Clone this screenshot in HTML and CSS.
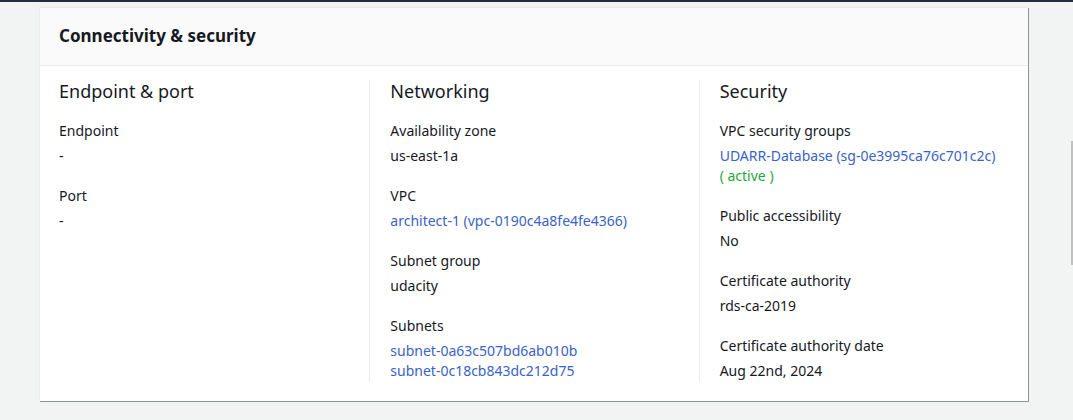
FILE: index.html
```html
<!DOCTYPE html>
<html lang="en">
<head>
<meta charset="utf-8">
<title>Connectivity &amp; security</title>
<link rel="stylesheet" href="styles.css">
</head>
<body>
<div class="topbar"></div>
<div class="page">
  <section class="card">
    <header class="card-header">
      <h2>Connectivity &amp; security</h2>
    </header>
    <div class="card-body">
      <div class="columns">
        <div class="col">
          <h3>Endpoint &amp; port</h3>
          <div class="field">
            <div class="label">Endpoint</div>
            <div class="value">-</div>
          </div>
          <div class="field">
            <div class="label">Port</div>
            <div class="value">-</div>
          </div>
        </div>
        <div class="col">
          <h3>Networking</h3>
          <div class="field">
            <div class="label">Availability zone</div>
            <div class="value">us-east-1a</div>
          </div>
          <div class="field">
            <div class="label">VPC</div>
            <div class="value"><a class="link" href="#">architect-1 (vpc-0190c4a8fe4fe4366)</a></div>
          </div>
          <div class="field">
            <div class="label">Subnet group</div>
            <div class="value">udacity</div>
          </div>
          <div class="field">
            <div class="label">Subnets</div>
            <div class="value">
              <a class="link block" href="#">subnet-0a63c507bd6ab010b</a>
              <a class="link block" href="#">subnet-0c18cb843dc212d75</a>
            </div>
          </div>
        </div>
        <div class="col">
          <h3>Security</h3>
          <div class="field">
            <div class="label">VPC security groups</div>
            <div class="value">
              <a class="link block" href="#">UDARR-Database (sg-0e3995ca76c701c2c)</a>
              <span class="status">( active )</span>
            </div>
          </div>
          <div class="field">
            <div class="label">Public accessibility</div>
            <div class="value">No</div>
          </div>
          <div class="field">
            <div class="label">Certificate authority</div>
            <div class="value">rds-ca-2019</div>
          </div>
          <div class="field">
            <div class="label">Certificate authority date</div>
            <div class="value">Aug 22nd, 2024</div>
          </div>
        </div>
      </div>
    </div>
  </section>
</div>
<div class="scrollthumb"></div>
</body>
</html>
```

FILE: styles.css
```css
* { box-sizing: border-box; }
html, body {
  margin: 0;
  padding: 0;
  height: 100%;
  overflow: hidden;
}
body {
  background: #f2f3f3;
  font-family: "Noto Sans", "Open Sans", "Liberation Sans", sans-serif;
  color: #16191f;
  font-size: 14px;
  line-height: 20px;
}
.topbar {
  height: 2px;
  background: #232f3e;
}
.page {
  padding: 5px 0 0 39px;
}
.card {
  width: 989px;
  background: #ffffff;
  border-left: 1px solid #eaeded;
  border-top: 1px solid #eaeded;
  box-shadow: 1px 1px 0 0 #879596;
}
.card-header {
  height: 58px;
  background: #fafafa;
  border-bottom: 1px solid #eaeded;
  padding: 0 19px 1px 19px;
  display: flex;
  align-items: center;
}
.card-header h2 {
  margin: 0;
  font-size: 17px;
  line-height: 22px;
  font-weight: 700;
  color: #16191f;
}
.card-body {
  padding: 14px 0 20px 0;
}
.columns {
  display: grid;
  grid-template-columns: repeat(3, 1fr);
}
.col {
  padding: 0 20px 0 19px;
  border-left: 1px solid #eaeded;
}
.col:first-child {
  border-left: none;
}
.col:not(:first-child) {
  padding-left: 20px;
}
.col h3 {
  margin: 0 0 19px 0;
  font-size: 18px;
  line-height: 22px;
  font-weight: 400;
  color: #16191f;
}
.field {
  margin-bottom: 20px;
}
.field:last-child {
  margin-bottom: 0;
}
.label {
  color: #16191f;
}
.value {
  margin-top: 5px;
}
.link {
  color: #3a63c6;
  text-decoration: none;
}
.block {
  display: block;
}
.status {
  color: #1ea83b;
}
.scrollthumb {
  position: fixed;
  right: 0;
  top: 141px;
  width: 2px;
  height: 124px;
  background: #c1c1c1;
}
```
